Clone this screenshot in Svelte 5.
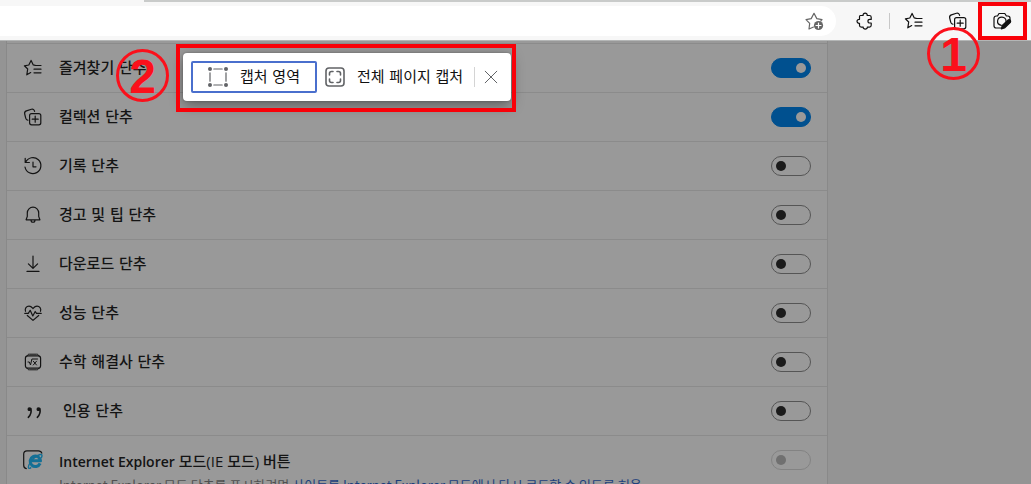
<script>
  let rows = $state([
    { icon: 'favorites', label: '즐겨찾기 단추', on: true },
    { icon: 'collections', label: '컬렉션 단추', on: true },
    { icon: 'history', label: '기록 단추', on: false },
    { icon: 'bell', label: '경고 및 팁 단추', on: false },
    { icon: 'download', label: '다운로드 단추', on: false },
    { icon: 'heart', label: '성능 단추', on: false },
    { icon: 'math', label: '수학 해결사 단추', on: false },
    { icon: 'quote', label: '인용 단추', on: false },
    { icon: 'ie', latin: 'Internet Explorer', label: '모드(IE 모드) 버튼', on: false, disabled: true }
  ]);
</script>

{#snippet glyph(name)}
  <svg class="glyph" viewBox="0 0 20 20" aria-hidden="true">
    {#if name === 'favorites'}
      <path d="M12.2 7.4 10.3 6.9 8.1 2.4 5.8 7 1.4 7.8 4.7 11 3.8 16.8 7.7 14.6M12 7.5H18M11 11.2H18M11 14.8H18" />
    {:else if name === 'collections'}
      <path d="M4.9 13.2C3.6 13.3 3 12.4 2.7 11.2L1.7 7C1.3 5.4 1.9 4.4 3.4 3.9L8.4 2.3C10 1.8 11.2 2.4 11.6 4.3" />
      <rect x="6.6" y="6.6" width="11.2" height="11.2" rx="2" />
      <path d="M12.2 9.2V15.2M9.2 12.2H15.2" />
    {:else if name === 'history'}
      <path d="M2.2 2.3V6.5H6.4M2.6 6.3A8 8 0 1 1 2 11M10 6V10.8H13" />
    {:else if name === 'bell'}
      <path d="M10 2.2A5.7 5.7 0 0 0 4.3 7.9V11.4L3.1 14.8H16.9L15.7 11.4V7.9A5.7 5.7 0 0 0 10 2.2ZM8 15C8 18 12 18 12 15" />
    {:else if name === 'download'}
      <path d="M10 2V14.2M5.4 9.8 10 14.4 14.6 9.8M4 17.4H16" />
    {:else if name === 'heart'}
      <path d="M2.5 8.3C1.5 5.3 3.5 3.2 6 3.2 8 3.2 9 4.4 10 5.5 11 4.4 12 3.2 14 3.2 16.5 3.2 18.5 5.3 17.5 8.3M4.3 12.5 10 17.4 15.7 12.5M1.8 10.4H5.3L7.2 7.3 9.8 13 12.2 8.5 13.5 10.4H18.2" />
    {:else if name === 'math'}
      <rect x="2.4" y="3.8" width="15.2" height="12.4" rx="2.5" />
      <path d="M4.2 3.7C4.7 2.5 5.2 2.2 6.3 2.2H13.7C14.8 2.2 15.3 2.5 15.8 3.7M4.2 16.3C4.7 17.5 5.2 17.8 6.3 17.8H13.7C14.8 17.8 15.3 17.5 15.8 16.3M5 10H6.3L7.5 13 8.9 7H14.5M10.3 9.2 13.5 13M13.5 9.2 10.3 13" stroke-width="1" />
    {:else if name === 'quote'}
      <g transform="translate(2 1)">
        <circle cx="4.4" cy="7.2" r="1.3" /><path d="M5.8 6.5C6.7 10 5.7 13 3.3 15.3" class="bold" />
        <circle cx="13.4" cy="7.2" r="1.3" /><path d="M14.8 6.5C15.7 10 14.7 13 12.3 15.3" class="bold" />
      </g>
    {:else if name === 'ie'}
      <path d="M3.3 18.6C1.5 18.2.7 17.2.7 15.2V4C.7 1.8 1.8.8 4 .8H15.3C17.3.8 18.3 1.5 18.8 3.2" />
      <path class="blue" d="M17.1 13.4A5.2 5.2 0 1 1 17.5 10.8H8.4" />
      <path class="blue thin" d="M8.2 17.4C5.8 19.4 4.5 18.2 6 14.8 8.2 10.2 13.2 5.4 17.2 4.5 19.2 4.1 19.5 5.5 18.3 8" />
    {:else if name === 'addstar'}
      <path d="M9.5 16 5 18 5.7 12.3 2 8.6 7.2 7.6 10 2.3 12.8 7.6 18 8.6 16.8 10" />
      <circle cx="14.5" cy="14.5" r="4.6" class="disc" />
      <path d="M14.5 12V17M12 14.5H17" class="white" />
    {:else if name === 'puzzle'}
      <path d="M5.3 4.5H8.1C7.6 1.4 12.7 1.4 12.2 4.5H14.4C15.5 4.5 16.2 5.2 16.2 6.3V8.4H14.9C12.3 8.4 12.3 12 14.9 12H16.2V14.3C16.2 15.4 15.5 16.1 14.4 16.1H12.3C12.8 18.7 7.8 18.7 8.2 16.1H6.2C5.1 16.1 4.5 15.4 4.5 14.3V12.3C1.2 12.7 1.2 7.9 4.5 8.3V5.8C4.5 5 4.8 4.5 5.3 4.5Z" />
    {:else if name === 'camera'}
      <path d="M8.7 17H4.2C2.8 17 2 16.2 2 14.8V7.2C2 5.8 2.8 5 4.2 5H5.5L7 2.5H12.8L14.4 5H15.8C17.2 5 18 5.8 18 7.2V8.5M9.3 14.3C3.4 13.1 5.1 6 10 6.2 12.6 6.3 14.2 8 14 10.3" />
      <path d="M9.3 17.8 10.3 14.4 16.4 8.8C18.3 8.4 19.1 9.8 18.4 11.2L12.5 17Z" class="solid" />
    {:else if name === 'region'}
      <path d="M5.8 2H14.2M5.8 18H14.2M2 5.8V14.2M18 5.8V14.2" />
      <g class="dots"><circle cx="2" cy="2" r="2" /><circle cx="18" cy="2" r="2" /><circle cx="2" cy="18" r="2" /><circle cx="18" cy="18" r="2" /></g>
    {:else if name === 'fullpage'}
      <rect x="1" y="1" width="18" height="18" rx="3" class="frame" />
      <path class="frame" d="M4.5 8V6.5Q4.5 4.5 6.5 4.5H8M12 4.5H13.5Q15.5 4.5 15.5 6.5V8M15.5 12V13.5Q15.5 15.5 13.5 15.5H12M8 15.5H6.5Q4.5 15.5 4.5 13.5V12" />
    {:else if name === 'close'}
      <path d="M4.2 4.2 15.8 15.8M15.8 4.2 4.2 15.8" stroke-width="1" />
    {/if}
  </svg>
{/snippet}

<div class="browser">
  <header>
    <div class="tabs"></div>
    <div class="toolbar">
      <div class="address">
        <input type="text" aria-label="주소" />
        <button class="tool muted" aria-label="즐겨찾기에 추가">{@render glyph('addstar')}</button>
      </div>
      <nav>
        <button class="tool" aria-label="확장">{@render glyph('puzzle')}</button>
        <span class="divider"></span>
        <button class="tool" aria-label="즐겨찾기">{@render glyph('favorites')}</button>
        <button class="tool" aria-label="컬렉션">{@render glyph('collections')}</button>
        <button class="tool" aria-label="웹 캡처">{@render glyph('camera')}</button>
      </nav>
    </div>
  </header>

  <main>
    <section class="card">
      {#each rows as row (row.icon)}
        <div class="row" class:last={row.disabled} class:quote={row.icon === 'quote'}>
          {@render glyph(row.icon)}
          <div class="text">
            <label for={row.icon}>{#if row.latin}<span class="latin">{row.latin}</span>{' '}{/if}{row.label}</label>
            {#if row.disabled}
              <p>Internet Explorer 모드 단추를 표시하려면 <a href="#sites">사이트를 Internet Explorer 모드에서 다시 로드할 수 있도록 허용</a></p>
            {/if}
          </div>
          <input id={row.icon} type="checkbox" role="switch" bind:checked={row.on} disabled={row.disabled} />
        </div>
      {/each}
    </section>
  </main>

  <div class="capture" role="toolbar" aria-label="웹 캡처">
    <button class="area">{@render glyph('region')}캡처 영역</button>
    <button class="full">{@render glyph('fullpage')}전체 페이지 캡처</button>
    <span class="line"></span>
    <button class="close" aria-label="닫기">{@render glyph('close')}</button>
  </div>

  <div class="mark popup-mark"></div>
  <div class="mark camera-mark"></div>
  <span class="number one">1</span>
  <span class="number two">2</span>
</div>

<style>
  :global(body) { margin: 0; }
  .browser {
    position: relative;
    display: flex;
    flex-direction: column;
    height: 100vh;
    overflow: hidden;
    background: #949494;
    color: #141414;
    font-family: "DejaVu Sans", "Noto Sans CJK KR", sans-serif;
  }
  button { padding: 0; border: 0; background: none; color: inherit; font: inherit; }
  .glyph {
    display: block;
    flex: none;
    width: 20px;
    height: 20px;
    overflow: visible;
    fill: none;
    stroke: currentColor;
    stroke-width: 1.2;
    stroke-linecap: round;
    stroke-linejoin: round;
  }
  .glyph circle, .solid { fill: currentColor; }
  .bold { stroke-width: 1.6; }
  .blue { stroke: #147096; stroke-width: 3; stroke-linecap: butt; }
  .thin { stroke-width: 1.4; }
  .disc { stroke: none; }
  .white { stroke: #fff; }
  .dots { stroke: none; }
  .frame { stroke-width: 1.6; }

  header { flex: none; background: #f7f7f7; border-bottom: 1px solid #b4b6b6; }
  .tabs { height: 2px; margin-left: 144px; background: #c9cbca; }
  .toolbar { display: flex; align-items: center; height: 38px; }
  .address {
    flex: 1;
    display: flex;
    align-items: center;
    height: 30px;
    padding-right: 12px;
    border-radius: 0 15px 15px 0;
    background: #fff;
  }
  .address input { flex: 1; min-width: 0; border: 0; outline: 0; background: none; }
  nav { display: flex; align-items: center; gap: 24px; padding: 0 19px 0 19px; }
  .tool { display: block; color: #101010; }
  .muted { color: #666; }
  .divider { width: 1px; height: 16px; margin: 0 -10px 0 -10px; background: #c8c8c8; }

  main { flex: 1; min-height: 0; padding: 0 203px 0 6px; }
  .card {
    padding-top: 2px;
    border: solid #898989;
    border-width: 0 1px;
    background: #999;
  }
  .row {
    display: flex;
    align-items: center;
    gap: 16px;
    height: 48px;
    padding: 0 16px;
    border-top: 1px solid #8b8b8b;
  }
  .text { flex: 1; }
  .quote .text { padding-left: 4px; }
  label { display: block; font-size: 15px; font-weight: 500; line-height: 24px; }
  .last { align-items: flex-start; height: auto; padding-top: 14px; }
  .last label { font-family: "Open Sans", "Noto Sans CJK KR", sans-serif; line-height: 22px; }
  .latin { font-size: 14px; font-weight: 600; }
  p { margin: 0; font: 13px/24px "Noto Sans CJK KR", sans-serif; color: #505050; }
  a { color: #1c3f7c; text-decoration: none; }
  .row input {
    appearance: none;
    display: flex;
    align-items: center;
    box-sizing: border-box;
    flex: none;
    width: 40px;
    height: 20px;
    margin: 0;
    padding: 0 4px;
    border: 1px solid #555;
    border-radius: 10px;
  }
  .row input::before { content: ""; width: 10px; height: 10px; border-radius: 50%; background: #1b1b1b; }
  .row input:checked { justify-content: flex-end; border-color: #00508f; background: #00508f; }
  .row input:checked::before { background: #999; }
  .row input:disabled { border-color: #838383; }
  .row input:disabled::before { background: #707070; }

  .capture {
    position: absolute;
    top: 53px;
    left: 183px;
    display: flex;
    align-items: center;
    box-sizing: border-box;
    height: 48px;
    padding: 0 10px 0 8px;
    border-radius: 4px;
    background: #fff;
    box-shadow: 0 4px 14px rgb(0 0 0 / 40%), 0 0 2px rgb(0 0 0 / 30%);
    color: #111;
    font-size: 15px;
    line-height: 22px;
    white-space: nowrap;
  }
  .capture button { display: flex; align-items: center; gap: 12px; }
  .capture .glyph { color: #616366; }
  .area { box-sizing: border-box; height: 32px; padding: 0 15px; border: 2px solid #4a6fcd; border-radius: 2px; }
  .full { padding: 0 11px 0 8px; }
  .line { width: 1px; height: 20px; margin-right: 6px; background: #d4d4d4; }

  .mark { position: absolute; box-sizing: border-box; border: 4px solid #f90008; pointer-events: none; }
  .popup-mark { top: 44px; left: 176px; width: 340px; height: 68px; }
  .camera-mark { top: 2px; right: 4px; width: 49px; height: 38px; }
  .number {
    position: absolute;
    box-sizing: border-box;
    width: 53px;
    height: 53px;
    border: 3px solid #fb101b;
    border-radius: 50%;
    color: #fb101b;
    font: bold 48px/49px "Liberation Sans", sans-serif;
    text-align: center;
    pointer-events: none;
  }
  .one { top: 27px; right: 51px; }
  .two { top: 49px; left: 116px; }
</style>
